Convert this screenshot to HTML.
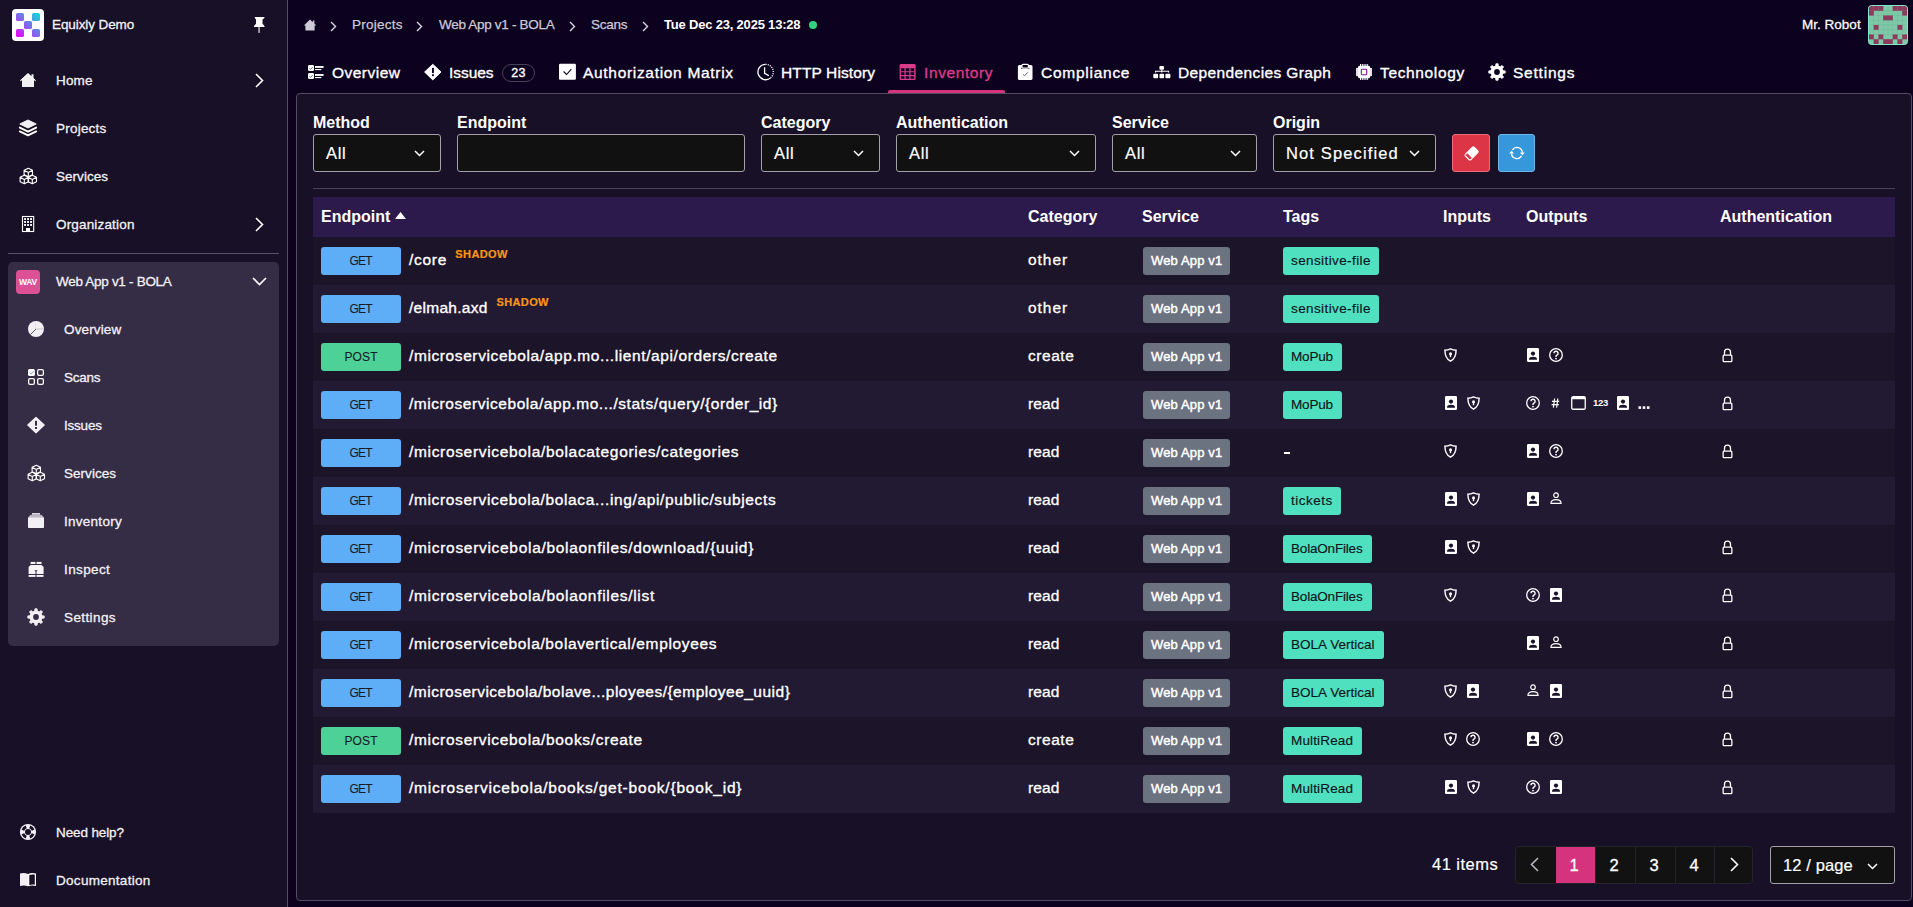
<!DOCTYPE html><html><head><meta charset="utf-8"><style>
*{box-sizing:border-box;margin:0;padding:0}
html,body{width:1913px;height:907px;overflow:hidden;background:#0c0220;font-family:"Liberation Sans",sans-serif;color:#fff}
.ab{position:absolute}
.t{position:absolute;white-space:nowrap;height:20px;line-height:20px}
#sb{position:absolute;left:0;top:0;width:288px;height:907px;background:#171026;border-right:1px solid #544c62}
.nav{-webkit-text-stroke:0.3px #f2f0f5}
.nav2{-webkit-text-stroke:0.25px #cdc9d4}
.ic{position:absolute;overflow:visible}
#panel{position:absolute;left:296px;top:93px;width:1616px;height:808px;background:#171026;border:1px solid #544c62;border-radius:4px}
.lbl{font-size:16px;font-weight:bold;color:#fff}
.sel{position:absolute;top:134px;height:38px;background:#111;border:1px solid #a49fa8;border-radius:3px}
.sel span{position:absolute;left:12px;top:8px;font-size:16.5px;line-height:20px;color:#fff;white-space:nowrap;-webkit-text-stroke:0.2px #fff}
.sel svg{position:absolute;right:15px;top:15px}
.th{font-size:16px;font-weight:bold;color:#fff}
.row{position:absolute;left:313px;width:1582px;height:48px}
.mb{position:absolute;left:8px;top:10px;width:80px;height:28px;border-radius:3px;font-size:12px;color:#1a1a28;text-align:center;line-height:28px;-webkit-text-stroke:0.1px #1a1a28}
.get{background:#5eadf7}
.post{background:#4dd196}
.ep{position:absolute;left:96px;top:13px;font-size:15.5px;line-height:20px;color:#fff;white-space:nowrap;-webkit-text-stroke:0.35px #fff}
.shadow{position:absolute;top:10px;line-height:14px;font-size:11px;font-weight:bold;color:#fd9418;letter-spacing:0.4px;white-space:nowrap;-webkit-text-stroke:0.2px #fd9418}
.cat{position:absolute;left:715px;top:12.5px;font-size:15.5px;line-height:20px;color:#fff;letter-spacing:0.5px;-webkit-text-stroke:0.3px #fff}
.svc{position:absolute;left:830px;top:10px;width:87px;height:28px;background:#6b7280;border-radius:3px;font-size:13px;line-height:28px;padding-left:8px;color:#fff;white-space:nowrap;-webkit-text-stroke:0.45px #fff;letter-spacing:0.15px}
.tag{position:absolute;left:970px;top:10px;height:28px;background:#4fe0bf;border-radius:3px;font-size:13.5px;line-height:28px;padding:0 0 0 8px;color:#10151a;white-space:nowrap;-webkit-text-stroke:0.15px #10151a}
</style></head><body>
<div id="sb">
<svg class="ic" style="left:12px;top:9px" width="32" height="32" viewBox="0 0 32 32"><defs><linearGradient id="lg" gradientUnits="userSpaceOnUse" x1="4" y1="28" x2="28" y2="4"><stop offset="0" stop-color="#f000ff"/><stop offset="0.5" stop-color="#7b6cec"/><stop offset="1" stop-color="#00e4d6"/></linearGradient></defs><rect width="32" height="32" rx="4" fill="#fff"/><g fill="url(#lg)"><rect x="4" y="4" width="8" height="8" rx="1.6"/><rect x="20" y="4" width="8" height="8" rx="1.6"/><rect x="12" y="12" width="8" height="8" rx="1.6"/><rect x="4" y="20" width="8" height="8" rx="1.6"/><rect x="20" y="20" width="8" height="8" rx="1.6"/></g></svg>
<div class="t nav" style="left:52px;top:15px;font-size:13.5px;color:#f2f0f5;letter-spacing:-0.091px;">Equixly Demo</div>
<svg class="ic" style="left:247px;top:12px" width="24" height="24" viewBox="0 0 24 24"><path d="M7.8 4.9h9.6v1.2l-1.9 1.3v4.3l2 2.2v1.1H7v-1.1l2-2.2V7.4L7.8 6.1z" fill="#fff"/><rect x="11.5" y="14.5" width="1.1" height="6.4" fill="#fff"/></svg>
<div class="t nav" style="left:56px;top:71px;font-size:13.5px;color:#f2f0f5;letter-spacing:0.133px;">Home</div>
<svg class="ic" style="left:255px;top:73px" width="9" height="15" viewBox="0 0 9 15"><path d="M1 1l6.5 6.5L1 14" stroke="#fff" stroke-width="1.6" fill="none"/></svg>
<div class="t nav" style="left:56px;top:119px;font-size:13.5px;color:#f2f0f5;letter-spacing:0.221px;">Projects</div>
<div class="t nav" style="left:56px;top:167px;font-size:13.5px;color:#f2f0f5;letter-spacing:0.036px;">Services</div>
<div class="t nav" style="left:56px;top:215px;font-size:13.5px;color:#f2f0f5;letter-spacing:0.168px;">Organization</div>
<svg class="ic" style="left:255px;top:217px" width="9" height="15" viewBox="0 0 9 15"><path d="M1 1l6.5 6.5L1 14" stroke="#fff" stroke-width="1.6" fill="none"/></svg>
<svg class="ic" style="left:16px;top:68px" width="24" height="24" viewBox="0 0 24 24"><path d="M12 5.2L4 12.6h2v6.4h12v-6.4h2l-2.5-2.3V6.2h-2v2.2z" fill="#f0eff2"/><path d="M4.3 12.8L12 5.6l7.7 7.2" fill="none" stroke="#fff" stroke-width="0.9"/></svg>
<svg class="ic" style="left:16px;top:116px" width="24" height="24" viewBox="0 0 24 24"><path d="M12 4L3.8 8 12 12l8.2-4z" fill="#f2f0f5" stroke="#f2f0f5" stroke-width="1" stroke-linejoin="round"/><path d="M3.8 11.6L12 15.6l8.2-4" fill="none" stroke="#fff" stroke-width="1.9" stroke-linejoin="round" stroke-linecap="round"/><path d="M3.8 15.4L12 19.4l8.2-4" fill="none" stroke="#fff" stroke-width="1.9" stroke-linejoin="round" stroke-linecap="round"/></svg>
<svg class="ic" style="left:16px;top:164px" width="24" height="24" viewBox="0 0 24 24" fill="none" stroke="#fff" stroke-width="1.1" stroke-linejoin="round"><path d="M12.3 4.199999999999999l4.2 2.1v4.4L12.3 12.799999999999999l-4.2-2.1V6.299999999999999z M8.100000000000001 6.299999999999999L12.3 8.5l4.2-2.2 M12.3 8.5v4.3"/><path d="M8.3 11.2l4.2 2.1v4.4L8.3 19.799999999999997l-4.2-2.1V13.299999999999999z M4.1000000000000005 13.299999999999999L8.3 15.5l4.2-2.2 M8.3 15.5v4.3"/><path d="M16.3 11.2l4.2 2.1v4.4L16.3 19.799999999999997l-4.2-2.1V13.299999999999999z M12.100000000000001 13.299999999999999L16.3 15.5l4.2-2.2 M16.3 15.5v4.3"/></svg>
<svg class="ic" style="left:16px;top:212px" width="24" height="24" viewBox="0 0 24 24"><rect x="6.5" y="4.5" width="11.2" height="15" fill="none" stroke="#fff" stroke-width="1.1"/><g fill="#fff"><rect x="8.1" y="6.1" width="1.9" height="1.9"/><rect x="11.1" y="6.1" width="1.9" height="1.9"/><rect x="14.1" y="6.1" width="1.9" height="1.9"/><rect x="8.1" y="9" width="1.9" height="1.9"/><rect x="11.1" y="9" width="1.9" height="1.9"/><rect x="14.1" y="9" width="1.9" height="1.9"/><rect x="8.1" y="12" width="1.9" height="1.9"/><rect x="11.1" y="12" width="1.9" height="1.9"/><rect x="14.1" y="12" width="1.9" height="1.9"/><rect x="10" y="16" width="4" height="3.6"/></g></svg>
<div class="ab" style="left:8px;top:253px;width:271px;height:1px;background:#57506a"></div>
<div class="ab" style="left:8px;top:262px;width:271px;height:384px;background:#352d45;border-radius:5px"></div>
<div class="ab" style="left:16px;top:270px;width:24px;height:24px;background:#dc5196;border-radius:4px;font-size:8.5px;font-weight:bold;line-height:24px;text-align:center;color:#fff;letter-spacing:-0.2px">WAV</div>
<div class="t nav" style="left:56px;top:272px;font-size:13.5px;color:#f2f0f5;letter-spacing:-0.297px;">Web App v1 - BOLA</div>
<svg class="ic" style="left:252px;top:277px" width="15" height="9" viewBox="0 0 15 9"><path d="M1 1l6.5 6.5L14 1" stroke="#fff" stroke-width="1.6" fill="none"/></svg>
<div class="t nav" style="left:64px;top:320px;font-size:13.5px;color:#f2f0f5;letter-spacing:0.143px;">Overview</div>
<div class="t nav" style="left:64px;top:368px;font-size:13.5px;color:#f2f0f5;letter-spacing:-0.225px;">Scans</div>
<div class="t nav" style="left:64px;top:416px;font-size:13.5px;color:#f2f0f5;letter-spacing:-0.22px;">Issues</div>
<div class="t nav" style="left:64px;top:464px;font-size:13.5px;color:#f2f0f5;letter-spacing:0.036px;">Services</div>
<div class="t nav" style="left:64px;top:512px;font-size:13.5px;color:#f2f0f5;letter-spacing:0.269px;">Inventory</div>
<div class="t nav" style="left:64px;top:560px;font-size:13.5px;color:#f2f0f5;letter-spacing:0.375px;">Inspect</div>
<div class="t nav" style="left:64px;top:608px;font-size:13.5px;color:#f2f0f5;letter-spacing:0.4px;">Settings</div>
<div class="t nav" style="left:56px;top:823px;font-size:13.5px;color:#f2f0f5;letter-spacing:-0.117px;">Need help?</div>
<div class="t nav" style="left:56px;top:871px;font-size:13.5px;color:#f2f0f5;letter-spacing:0.292px;">Documentation</div>
</div>
<svg class="ic" style="left:24px;top:317px" width="24" height="24" viewBox="0 0 24 24" ><circle cx="12" cy="12" r="8" fill="#f2f0f5"/><path d="M12 12V4" stroke="#f2f0f5" stroke-width="1"/><path d="M12.3 12h7.7" stroke="#c9c4cf" stroke-width="1"/><path d="M12 12L6.3 17.7" stroke="#352d45" stroke-width="0.8"/><path d="M11.5 4.2v7.8" stroke="#e8c9a0" stroke-width="0.5" opacity="0.6"/></svg>
<svg class="ic" style="left:24px;top:365px" width="24" height="24" viewBox="0 0 24 24" ><rect x="4" y="4" width="6.9" height="6.9" rx="1.5" fill="#fff"/><path d="M5.6 7.6l1.5 1.3 2.4-2.7" fill="none" stroke="#6a8fc0" stroke-width="0.9"/><g fill="none" stroke="#fff" stroke-width="1.3"><rect x="13.65" y="4.65" width="5.7" height="5.7" rx="1.3"/><rect x="4.65" y="13.65" width="5.7" height="5.7" rx="1.3"/><rect x="13.65" y="13.65" width="5.7" height="5.7" rx="1.3"/></g></svg>
<svg class="ic" style="left:24px;top:413px" width="24" height="24" viewBox="0 0 24 24" ><path d="M12 4.3L20.2 12 12 19.9 3.8 12z" fill="#f2f0f5" stroke="#f2f0f5" stroke-width="1.1" stroke-linejoin="round"/><rect x="11" y="7.9" width="2" height="4.8" fill="#352d45"/><rect x="11" y="14" width="2" height="2" fill="#352d45"/></svg>
<svg class="ic" style="left:24px;top:461px" width="24" height="24" viewBox="0 0 24 24" ><g fill="none" stroke="#fff" stroke-width="1.1" stroke-linejoin="round"><path d="M12.3 4.199999999999999l4.2 2.1v4.4L12.3 12.799999999999999l-4.2-2.1V6.299999999999999z M8.100000000000001 6.299999999999999L12.3 8.5l4.2-2.2 M12.3 8.5v4.3"/><path d="M8.3 11.2l4.2 2.1v4.4L8.3 19.799999999999997l-4.2-2.1V13.299999999999999z M4.1000000000000005 13.299999999999999L8.3 15.5l4.2-2.2 M8.3 15.5v4.3"/><path d="M16.3 11.2l4.2 2.1v4.4L16.3 19.799999999999997l-4.2-2.1V13.299999999999999z M12.100000000000001 13.299999999999999L16.3 15.5l4.2-2.2 M16.3 15.5v4.3"/></g></svg>
<svg class="ic" style="left:24px;top:509px" width="24" height="24" viewBox="0 0 24 24" ><rect x="8" y="4" width="8" height="1.8" fill="#dcd8e2"/><path d="M6.5 5.8h11l2.5 2.7H4z" fill="#bdb7c6"/><rect x="4" y="8.3" width="16" height="10.7" rx="0.8" fill="#f2f0f5"/></svg>
<svg class="ic" style="left:24px;top:557px" width="24" height="24" viewBox="0 0 24 24" ><g fill="#f6f4f8"><rect x="6.6" y="4.9" width="4.8" height="2.1"/><rect x="12.5" y="4.9" width="5" height="2.1"/><path d="M6.6 7.9h10.9l2.1 2.1v6.9H4.6V9.9z"/><rect x="4.6" y="18" width="6.9" height="1.9"/><rect x="12.5" y="18" width="7" height="1.9"/></g><path d="M10.3 13.2h3.4l-1.2 1.2v2.5h-1v-2.5z" fill="#352d45"/></svg>
<svg class="ic" style="left:24px;top:605px" width="24" height="24" viewBox="0 0 24 24"><path d="M10.60 6.37 L10.90 3.77 L13.10 3.77 L13.40 6.37 L14.99 7.03 L17.04 5.40 L18.60 6.96 L16.97 9.01 L17.63 10.60 L20.23 10.90 L20.23 13.10 L17.63 13.40 L16.97 14.99 L18.60 17.04 L17.04 18.60 L14.99 16.97 L13.40 17.63 L13.10 20.23 L10.90 20.23 L10.60 17.63 L9.01 16.97 L6.96 18.60 L5.40 17.04 L7.03 14.99 L6.37 13.40 L3.77 13.10 L3.77 10.90 L6.37 10.60 L7.03 9.01 L5.40 6.96 L6.96 5.40 L9.01 7.03z" fill="#f2f0f5" stroke="#f2f0f5" stroke-width="0.8" stroke-linejoin="round"/><circle cx="12" cy="12" r="6.3" fill="#f2f0f5"/><circle cx="12" cy="12" r="2.9" fill="#352d45"/></svg>
<svg class="ic" style="left:16px;top:820px" width="24" height="24" viewBox="0 0 24 24"><circle cx="12" cy="12" r="8.1" fill="#f4f2f6"/><path d="M18.43 14.21A6.8 6.8 0 0 1 14.21 18.43L13.30 15.78A4.0 4.0 0 0 0 15.78 13.30zM9.79 18.43A6.8 6.8 0 0 1 5.57 14.21L8.22 13.30A4.0 4.0 0 0 0 10.70 15.78zM5.57 9.79A6.8 6.8 0 0 1 9.79 5.57L10.70 8.22A4.0 4.0 0 0 0 8.22 10.70zM14.21 5.57A6.8 6.8 0 0 1 18.43 9.79L15.78 10.70A4.0 4.0 0 0 0 13.30 8.22z" fill="#171026"/><circle cx="12" cy="12" r="3" fill="#171026"/></svg>
<svg class="ic" style="left:16px;top:868px" width="24" height="24" viewBox="0 0 24 24" ><path d="M4 5.6c2.6-.8 5.3-.8 8 .3v12.3c-2.7-1-5.4-1-8-.3z" fill="#f2f0f5"/><path d="M12 5.9c2.7-1.1 5.4-1.1 8-.3v12.3c-2.6-.7-5.3-.7-8 .3z" fill="#fff"/><path d="M13.3 7c2-.6 3.9-.7 5.5-.3v10c-1.7-.4-3.6-.3-5.5.3z" fill="#171026"/></svg>
<svg class="ic" style="left:303px;top:19px" width="14" height="13" viewBox="0 0 14 13"><path d="M7 0.6L0.8 6.4h1.6v5.2h9.2V6.4h1.6L11.4 4.6V1.4H9.8v1.8z" fill="#cfcbd6"/></svg>
<svg class="ic" style="left:330px;top:20.5px" width="7" height="11" viewBox="0 0 7 11"><path d="M1 1l4.5 4.5L1 10" stroke="#dcd8e2" stroke-width="1.4" fill="none"/></svg>
<svg class="ic" style="left:416px;top:20.5px" width="7" height="11" viewBox="0 0 7 11"><path d="M1 1l4.5 4.5L1 10" stroke="#dcd8e2" stroke-width="1.4" fill="none"/></svg>
<svg class="ic" style="left:569px;top:20.5px" width="7" height="11" viewBox="0 0 7 11"><path d="M1 1l4.5 4.5L1 10" stroke="#dcd8e2" stroke-width="1.4" fill="none"/></svg>
<svg class="ic" style="left:642px;top:20.5px" width="7" height="11" viewBox="0 0 7 11"><path d="M1 1l4.5 4.5L1 10" stroke="#dcd8e2" stroke-width="1.4" fill="none"/></svg>
<div class="t nav2" style="left:352px;top:15px;font-size:13.5px;color:#cdc9d4;letter-spacing:0.236px;">Projects</div>
<div class="t nav2" style="left:439px;top:15px;font-size:13.5px;color:#cdc9d4;letter-spacing:-0.303px;">Web App v1 - BOLA</div>
<div class="t nav2" style="left:591px;top:15px;font-size:13.5px;color:#cdc9d4;letter-spacing:-0.225px;">Scans</div>
<div class="t" style="left:664px;top:15px;font-size:13px;font-weight:bold;color:#fff;letter-spacing:-0.195px;">Tue Dec 23, 2025 13:28</div>
<div class="ab" style="left:809px;top:21px;width:8px;height:8px;border-radius:50%;background:#2fd47c"></div>
<div class="t nav" style="left:1802px;top:15px;font-size:13.5px;color:#fff;letter-spacing:0.013px;">Mr. Robot</div>
<svg class="ic" style="left:1868px;top:5px" width="40" height="40" viewBox="0 0 40 40"><defs><clipPath id="avc"><rect x="0.5" y="0.5" width="39" height="39" rx="3"/></clipPath></defs><g clip-path="url(#avc)"><rect width="40" height="40" fill="#7ecaa8"/><rect x="5.45" y="1" width="0.6" height="38" fill="#6fae92" opacity="0.6"/><rect y="5.45" x="1" height="0.6" width="38" fill="#6fae92" opacity="0.6"/><rect x="10.20" y="1" width="0.6" height="38" fill="#6fae92" opacity="0.6"/><rect y="10.20" x="1" height="0.6" width="38" fill="#6fae92" opacity="0.6"/><rect x="14.95" y="1" width="0.6" height="38" fill="#6fae92" opacity="0.6"/><rect y="14.95" x="1" height="0.6" width="38" fill="#6fae92" opacity="0.6"/><rect x="19.70" y="1" width="0.6" height="38" fill="#6fae92" opacity="0.6"/><rect y="19.70" x="1" height="0.6" width="38" fill="#6fae92" opacity="0.6"/><rect x="24.45" y="1" width="0.6" height="38" fill="#6fae92" opacity="0.6"/><rect y="24.45" x="1" height="0.6" width="38" fill="#6fae92" opacity="0.6"/><rect x="29.20" y="1" width="0.6" height="38" fill="#6fae92" opacity="0.6"/><rect y="29.20" x="1" height="0.6" width="38" fill="#6fae92" opacity="0.6"/><rect x="33.95" y="1" width="0.6" height="38" fill="#6fae92" opacity="0.6"/><rect y="33.95" x="1" height="0.6" width="38" fill="#6fae92" opacity="0.6"/><rect x="0.95" y="0.95" width="4.85" height="4.85" fill="#8d3b5d"/><rect x="5.70" y="0.95" width="4.85" height="4.85" fill="#8d3b5d"/><rect x="10.45" y="0.95" width="4.85" height="4.85" fill="#8d3b5d"/><rect x="24.70" y="0.95" width="4.85" height="4.85" fill="#8d3b5d"/><rect x="29.45" y="0.95" width="4.85" height="4.85" fill="#8d3b5d"/><rect x="34.20" y="0.95" width="4.85" height="4.85" fill="#8d3b5d"/><rect x="0.95" y="5.70" width="4.85" height="4.85" fill="#8d3b5d"/><rect x="34.20" y="5.70" width="4.85" height="4.85" fill="#8d3b5d"/><rect x="15.20" y="10.45" width="4.85" height="4.85" fill="#8d3b5d"/><rect x="19.95" y="10.45" width="4.85" height="4.85" fill="#8d3b5d"/><rect x="5.70" y="19.95" width="4.85" height="4.85" fill="#8d3b5d"/><rect x="29.45" y="19.95" width="4.85" height="4.85" fill="#8d3b5d"/><rect x="0.95" y="29.45" width="4.85" height="4.85" fill="#8d3b5d"/><rect x="10.45" y="29.45" width="4.85" height="4.85" fill="#8d3b5d"/><rect x="24.70" y="29.45" width="4.85" height="4.85" fill="#8d3b5d"/><rect x="34.20" y="29.45" width="4.85" height="4.85" fill="#8d3b5d"/><rect x="5.70" y="34.20" width="4.85" height="4.85" fill="#8d3b5d"/><rect x="15.20" y="34.20" width="4.85" height="4.85" fill="#8d3b5d"/><rect x="19.95" y="34.20" width="4.85" height="4.85" fill="#8d3b5d"/><rect x="29.45" y="34.20" width="4.85" height="4.85" fill="#8d3b5d"/></g><rect x="0.5" y="0.5" width="39" height="39" rx="3" fill="none" stroke="#7fe8c8" stroke-width="1"/></svg>
<div class="t tb" style="left:332px;top:62.5px;font-size:15.5px;color:#fff;letter-spacing:0.479px;-webkit-text-stroke:0.35px #fff">Overview</div>
<div class="t tb" style="left:449px;top:62.5px;font-size:15.5px;color:#fff;letter-spacing:-0.06px;-webkit-text-stroke:0.35px #fff">Issues</div>
<div class="t tb" style="left:583px;top:62.5px;font-size:15.5px;color:#fff;letter-spacing:0.687px;-webkit-text-stroke:0.35px #fff">Authorization Matrix</div>
<div class="t tb" style="left:781px;top:62.5px;font-size:15.5px;color:#fff;letter-spacing:0.118px;-webkit-text-stroke:0.35px #fff">HTTP History</div>
<div class="t tb" style="left:924px;top:62.5px;font-size:15.5px;color:#dc3a86;letter-spacing:0.606px;-webkit-text-stroke:0.35px #dc3a86">Inventory</div>
<div class="t tb" style="left:1041px;top:62.5px;font-size:15.5px;color:#fff;letter-spacing:0.739px;-webkit-text-stroke:0.35px #fff">Compliance</div>
<div class="t tb" style="left:1178px;top:62.5px;font-size:15.5px;color:#fff;letter-spacing:0.382px;-webkit-text-stroke:0.35px #fff">Dependencies Graph</div>
<div class="t tb" style="left:1380px;top:62.5px;font-size:15.5px;color:#fff;letter-spacing:0.644px;-webkit-text-stroke:0.35px #fff">Technology</div>
<div class="t tb" style="left:1513px;top:62.5px;font-size:15.5px;color:#fff;letter-spacing:0.786px;-webkit-text-stroke:0.35px #fff">Settings</div>
<div class="ab" style="left:502px;top:64px;width:33px;height:18px;border:1px solid #4a4058;border-radius:9px;font-size:12.5px;line-height:16px;text-align:center;color:#fff;-webkit-text-stroke:0.35px #fff;letter-spacing:0.3px">23</div>
<div class="ab" style="left:888px;top:90px;width:117px;height:3px;background:#d6337e;border-radius:2px 2px 0 0"></div>
<svg class="ic" style="left:304px;top:60px" width="24" height="24" viewBox="0 0 24 24" ><rect x="4" y="5" width="6" height="6" rx="1.3" fill="#fff"/><path d="M5.4 8.2l1.3 1.2 2.1-2.4" fill="none" stroke="#5a6a9a" stroke-width="0.9"/><rect x="4" y="13" width="6" height="6" rx="1.3" fill="#fff"/><path d="M5.4 16.2l1.3 1.2 2.1-2.4" fill="none" stroke="#5a6a9a" stroke-width="0.9"/><g fill="#fff"><rect x="11" y="6" width="8.6" height="1.9"/><rect x="11" y="9" width="6.4" height="1.1"/><rect x="11" y="14" width="8.6" height="1.9"/><rect x="11" y="17" width="6.4" height="1.1"/></g></svg>
<svg class="ic" style="left:420px;top:60px" width="24" height="24" viewBox="0 0 24 24" ><path d="M12.8 4.3L21 12l-8.2 7.9L4.6 12z" fill="#fff" stroke="#fff" stroke-width="1" stroke-linejoin="round"/><rect x="12" y="7.9" width="1.9" height="5.2" fill="#0c0220"/><rect x="12" y="14.3" width="1.9" height="1.8" fill="#0c0220"/></svg>
<svg class="ic" style="left:555px;top:60px" width="24" height="24" viewBox="0 0 24 24" ><rect x="4" y="3.8" width="16.9" height="16" rx="1.2" fill="#fff"/><path d="M8.6 11.5l3 3 4.7-5.3" fill="none" stroke="#0c0220" stroke-width="1.1"/></svg>
<svg class="ic" style="left:753px;top:60px" width="24" height="24" viewBox="0 0 24 24" ><g fill="none" stroke="#fff" stroke-width="1.3"><path d="M12.6 4.3A7.7 7.7 0 1 0 17.9 17.6"/><path d="M12.6 4.3A7.7 7.7 0 0 1 20.3 12a7.7 7.7 0 0 1-2.4 5.6" stroke-dasharray="1.1 1.1"/><path d="M11.6 7.2v6.1l4.2 2.3"/></g></svg>
<svg class="ic" style="left:895px;top:60px" width="24" height="24" viewBox="0 0 24 24" ><g fill="#dc3a8a"><path d="M4.6 5.2a1.2 1.2 0 0 1 1.2-1.2h13.6a1.2 1.2 0 0 1 1.2 1.2v13.6a1.2 1.2 0 0 1-1.2 1.2H5.8a1.2 1.2 0 0 1-1.2-1.2z M5.9 8.3v2.9h3.6V8.3z M10.7 8.3v2.9h3.6V8.3z M15.5 8.3v2.9h3.7V8.3z M5.9 12.3v2.8h3.6v-2.8z M10.7 12.3v2.8h3.6v-2.8z M15.5 12.3v2.8h3.7v-2.8z M5.9 16.2v2.6h3.6v-2.6z M10.7 16.2v2.6h3.6v-2.6z M15.5 16.2v2.6h3.7v-2.6z" fill-rule="evenodd"/></g></svg>
<svg class="ic" style="left:1013px;top:60px" width="24" height="24" viewBox="0 0 24 24" ><rect x="4.9" y="5" width="14.6" height="15.1" rx="1.6" fill="#fff"/><rect x="8.1" y="7.6" width="8.2" height="1.4" fill="#0c0220"/><rect x="8.9" y="4.3" width="6.6" height="3.9" rx="1.2" fill="#0c0220" stroke="#fff" stroke-width="1.3"/><path d="M10.1 14.4l1.5 1.4 3.2-3.4" fill="none" stroke="#5a4a80" stroke-width="0.9"/></svg>
<svg class="ic" style="left:1150px;top:60px" width="24" height="24" viewBox="0 0 24 24" ><g fill="#fff"><rect x="9.4" y="6" width="4.6" height="3.8" rx="1"/><rect x="3.3" y="13.8" width="4.8" height="4.5" rx="1"/><rect x="9.5" y="13.8" width="4.6" height="4.5" rx="1"/><rect x="15.4" y="13.8" width="5" height="4.5" rx="1"/></g><path d="M5.6 12.5v-1.2h13v1.2M11.8 9.8v2.7" fill="none" stroke="#fff" stroke-width="1.1"/></svg>
<svg class="ic" style="left:1352px;top:60px" width="24" height="24" viewBox="0 0 24 24" ><g fill="#fff"><rect x="5.8" y="5.8" width="12.5" height="12.5" rx="2"/><path d="M8 4h1v2H8zM9.8 4h1v2h-1zM11.6 4h1v2h-1zM13.4 4h1v2h-1zM15.2 4h.9v2h-.9z"/><path d="M8 18h1v2H8zM9.8 18h1v2h-1zM11.6 18h1v2h-1zM13.4 18h1v2h-1zM15.2 18h.9v2h-.9z"/><rect x="4" y="8" width="2" height="8" fill="#e6dfe8"/><rect x="18" y="8" width="2" height="8" fill="#e6dfe8"/></g><rect x="9.3" y="9.3" width="5.4" height="5.4" rx="0.6" fill="none" stroke="#7a1a8a" stroke-width="1.1"/></svg>
<svg class="ic" style="left:1485px;top:60px" width="24" height="24" viewBox="0 0 24 24"><path d="M10.60 6.37 L10.90 3.77 L13.10 3.77 L13.40 6.37 L14.99 7.03 L17.04 5.40 L18.60 6.96 L16.97 9.01 L17.63 10.60 L20.23 10.90 L20.23 13.10 L17.63 13.40 L16.97 14.99 L18.60 17.04 L17.04 18.60 L14.99 16.97 L13.40 17.63 L13.10 20.23 L10.90 20.23 L10.60 17.63 L9.01 16.97 L6.96 18.60 L5.40 17.04 L7.03 14.99 L6.37 13.40 L3.77 13.10 L3.77 10.90 L6.37 10.60 L7.03 9.01 L5.40 6.96 L6.96 5.40 L9.01 7.03z" fill="#fff" stroke="#fff" stroke-width="0.8" stroke-linejoin="round"/><circle cx="12" cy="12" r="6.3" fill="#fff"/><circle cx="12" cy="12" r="2.9" fill="#0c0220"/></svg>
<div id="panel"></div>
<div class="t lbl" style="left:313px;top:113px">Method</div>
<div class="t lbl" style="left:457px;top:113px">Endpoint</div>
<div class="t lbl" style="left:761px;top:113px">Category</div>
<div class="t lbl" style="left:896px;top:113px">Authentication</div>
<div class="t lbl" style="left:1112px;top:113px">Service</div>
<div class="t lbl" style="left:1273px;top:113px">Origin</div>
<div class="sel" style="left:313px;width:128px"><span style="letter-spacing:0.725px">All</span><svg width="11" height="7" viewBox="0 0 11 7" ><path d="M1 1l4.5 4.5L10 1" stroke="#fff" stroke-width="1.5" fill="none"/></svg></div>
<div class="sel" style="left:761px;width:119px"><span style="letter-spacing:0.725px">All</span><svg width="11" height="7" viewBox="0 0 11 7" ><path d="M1 1l4.5 4.5L10 1" stroke="#fff" stroke-width="1.5" fill="none"/></svg></div>
<div class="sel" style="left:896px;width:200px"><span style="letter-spacing:0.725px">All</span><svg width="11" height="7" viewBox="0 0 11 7" ><path d="M1 1l4.5 4.5L10 1" stroke="#fff" stroke-width="1.5" fill="none"/></svg></div>
<div class="sel" style="left:1112px;width:145px"><span style="letter-spacing:0.725px">All</span><svg width="11" height="7" viewBox="0 0 11 7" ><path d="M1 1l4.5 4.5L10 1" stroke="#fff" stroke-width="1.5" fill="none"/></svg></div>
<div class="sel" style="left:1273px;width:163px"><span style="letter-spacing:1.137px">Not Specified</span><svg width="11" height="7" viewBox="0 0 11 7" ><path d="M1 1l4.5 4.5L10 1" stroke="#fff" stroke-width="1.5" fill="none"/></svg></div>
<div class="sel" style="left:457px;width:288px"></div>
<div class="ab" style="left:1452px;top:134px;width:38px;height:38px;background:#dc3545;border:1px solid #ea6f7a;border-radius:3px"><svg class="ic" style="left:9px;top:9px" width="20" height="20" viewBox="0 0 20 20"><g transform="rotate(45 9.6 9.4)"><rect x="5.2" y="2.6" width="8.8" height="13.6" rx="2" fill="#fff"/><rect x="6.4" y="12.4" width="6.4" height="2.6" fill="#dc3545"/></g></svg></div>
<div class="ab" style="left:1498px;top:134px;width:37px;height:38px;background:#3697db;border:1px solid #6cb6ea;border-radius:3px"><svg class="ic" style="left:9px;top:9px" width="20" height="20" viewBox="0 0 20 20" fill="none" stroke="#fff" stroke-width="1.3"><path d="M4.4 6.1A5.3 5.3 0 0 1 14.3 8.6"/><path d="M13.5 11.9A5.3 5.3 0 0 1 3.6 9.4"/><path d="M11.9 8.4h4.9l-2.45 2.8z" fill="#fff" stroke="none"/><path d="M1.15 9.6h4.9L3.6 6.8z" fill="#fff" stroke="none"/></svg></div>
<div class="ab" style="left:313px;top:188px;width:1582px;height:1px;background:#4a4258"></div>
<div class="ab" style="left:313px;top:197px;width:1582px;height:40px;background:#2d1a4d"></div>
<div class="t th" style="left:321px;top:207px">Endpoint</div>
<svg class="ic" style="left:395px;top:212px" width="11" height="7" viewBox="0 0 11 7"><path d="M5.5 0L11 7H0z" fill="#fff"/></svg>
<div class="t th" style="left:1028px;top:207px">Category</div>
<div class="t th" style="left:1142px;top:207px">Service</div>
<div class="t th" style="left:1283px;top:207px">Tags</div>
<div class="t th" style="left:1443px;top:207px">Inputs</div>
<div class="t th" style="left:1526px;top:207px">Outputs</div>
<div class="t th" style="left:1720px;top:207px">Authentication</div>
<div class="row" style="top:237px;background:#1c1429">
<div class="mb get" style="letter-spacing:-0.725px;text-indent:-0.725px">GET</div>
<div class="ep" style="letter-spacing:0.712px">/core</div>
<div class="shadow" style="left:142.3px">SHADOW</div>
<div class="cat" style="letter-spacing:0.963px">other</div>
<div class="svc">Web App v1</div>
<div class="tag" style="width:96px;letter-spacing:0.4px">sensitive-file</div>
</div>
<div class="row" style="top:285px;background:#221a33">
<div class="mb get" style="letter-spacing:-0.725px;text-indent:-0.725px">GET</div>
<div class="ep" style="letter-spacing:0.289px">/elmah.axd</div>
<div class="shadow" style="left:183.4px">SHADOW</div>
<div class="cat" style="letter-spacing:0.963px">other</div>
<div class="svc">Web App v1</div>
<div class="tag" style="width:96px;letter-spacing:0.4px">sensitive-file</div>
</div>
<div class="row" style="top:333px;background:#1c1429">
<div class="mb post" style="letter-spacing:0.117px;text-indent:0.117px">POST</div>
<div class="ep" style="letter-spacing:0.601px">/microservicebola/app.mo...lient/api/orders/create</div>
<div class="cat" style="letter-spacing:0.54px">create</div>
<div class="svc">Web App v1</div>
<div class="tag" style="width:59px;letter-spacing:-0.188px">MoPub</div>
</div>
<svg class="ic" style="left:1444.0px;top:348px" width="13" height="14" viewBox="0 0 13 14"><path d="M6.5 0.8c2 .9 3.8 1.3 5.6 1.4 0 5.2-1.9 9-5.6 11-3.7-2-5.6-5.8-5.6-11 1.8-.1 3.6-.5 5.6-1.4z" fill="none" stroke="#fff" stroke-width="1.4"/><circle cx="6.5" cy="5.8" r="1.5" fill="#fff"/><rect x="5.8" y="6" width="1.4" height="3.2" fill="#fff"/></svg>
<svg class="ic" style="left:1527.0px;top:348px" width="12" height="14" viewBox="0 0 12 14"><rect x="0" y="0" width="12" height="14" rx="1.2" fill="#fff"/><circle cx="6" cy="5.6" r="2.1" fill="#1c1429"/><path d="M2 11.2c0-1.6 1.6-2.4 4-2.4s4 .8 4 2.4v.6H2z" fill="#1c1429"/></svg>
<svg class="ic" style="left:1548.5px;top:348px" width="14" height="14" viewBox="0 0 14 14"><circle cx="7" cy="7" r="6.3" fill="none" stroke="#fff" stroke-width="1.3"/><path d="M4.9 5.3a2.1 2.1 0 1 1 3 1.9c-.6.3-.9.7-.9 1.3v.6" fill="none" stroke="#fff" stroke-width="1.4"/><circle cx="7" cy="10.6" r=".9" fill="#fff"/></svg>
<svg class="ic" style="left:1721.5px;top:348px" width="11" height="16" viewBox="0 0 11 16" fill="none" stroke="#fff" stroke-width="1.3"><rect x="1.15" y="7.2" width="8.7" height="6.5" rx="0.9"/><path d="M2.5 7.2V4.1a3 3 0 0 1 6 0v3.1"/></svg>
<div class="row" style="top:381px;background:#221a33">
<div class="mb get" style="letter-spacing:-0.725px;text-indent:-0.725px">GET</div>
<div class="ep" style="letter-spacing:0.552px">/microservicebola/app.mo.../stats/query/{order_id}</div>
<div class="cat" style="letter-spacing:0.1px">read</div>
<div class="svc">Web App v1</div>
<div class="tag" style="width:59px;letter-spacing:-0.188px">MoPub</div>
</div>
<svg class="ic" style="left:1444.5px;top:396px" width="12" height="14" viewBox="0 0 12 14"><rect x="0" y="0" width="12" height="14" rx="1.2" fill="#fff"/><circle cx="6" cy="5.6" r="2.1" fill="#1c1429"/><path d="M2 11.2c0-1.6 1.6-2.4 4-2.4s4 .8 4 2.4v.6H2z" fill="#1c1429"/></svg>
<svg class="ic" style="left:1466.5px;top:396px" width="13" height="14" viewBox="0 0 13 14"><path d="M6.5 0.8c2 .9 3.8 1.3 5.6 1.4 0 5.2-1.9 9-5.6 11-3.7-2-5.6-5.8-5.6-11 1.8-.1 3.6-.5 5.6-1.4z" fill="none" stroke="#fff" stroke-width="1.4"/><circle cx="6.5" cy="5.8" r="1.5" fill="#fff"/><rect x="5.8" y="6" width="1.4" height="3.2" fill="#fff"/></svg>
<svg class="ic" style="left:1526px;top:396px" width="14" height="14" viewBox="0 0 14 14"><circle cx="7" cy="7" r="6.3" fill="none" stroke="#fff" stroke-width="1.3"/><path d="M4.9 5.3a2.1 2.1 0 1 1 3 1.9c-.6.3-.9.7-.9 1.3v.6" fill="none" stroke="#fff" stroke-width="1.4"/><circle cx="7" cy="10.6" r=".9" fill="#fff"/></svg>
<svg class="ic" style="left:1551.0px;top:396px" width="9" height="14" viewBox="0 0 9 14" fill="none" stroke="#fff" stroke-width="1.2"><path d="M3.6 2.5L2.4 11.6M6.8 2.5L5.6 11.6M1 5.4h7.2M0.6 8.6h7.2"/></svg>
<svg class="ic" style="left:1570.5px;top:396px" width="15" height="14" viewBox="0 0 15 14"><rect x="0.75" y="0.75" width="13.5" height="12.5" rx="1.3" fill="none" stroke="#fff" stroke-width="1.3"/><rect x="0.75" y="0.75" width="13.5" height="2.6" rx="1" fill="#fff"/></svg>
<div class="ab" style="left:1593px;top:396px;font-size:9.5px;font-weight:bold;line-height:14px;color:#fff;letter-spacing:-0.3px">123</div>
<svg class="ic" style="left:1616.5px;top:396px" width="12" height="14" viewBox="0 0 12 14"><rect x="0" y="0" width="12" height="14" rx="1.2" fill="#fff"/><circle cx="6" cy="5.6" r="2.1" fill="#1c1429"/><path d="M2 11.2c0-1.6 1.6-2.4 4-2.4s4 .8 4 2.4v.6H2z" fill="#1c1429"/></svg>
<svg class="ic" style="left:1638.0px;top:396px" width="12" height="14" viewBox="0 0 12 14" fill="#fff"><rect x="0.5" y="10.3" width="2.6" height="2.6"/><rect x="4.7" y="10.3" width="2.6" height="2.6"/><rect x="8.9" y="10.3" width="2.6" height="2.6"/></svg>
<svg class="ic" style="left:1721.5px;top:396px" width="11" height="16" viewBox="0 0 11 16" fill="none" stroke="#fff" stroke-width="1.3"><rect x="1.15" y="7.2" width="8.7" height="6.5" rx="0.9"/><path d="M2.5 7.2V4.1a3 3 0 0 1 6 0v3.1"/></svg>
<div class="row" style="top:429px;background:#1c1429">
<div class="mb get" style="letter-spacing:-0.725px;text-indent:-0.725px">GET</div>
<div class="ep" style="letter-spacing:0.668px">/microservicebola/bolacategories/categories</div>
<div class="cat" style="letter-spacing:0.1px">read</div>
<div class="svc">Web App v1</div>
<div class="ab" style="left:971px;top:23px;width:6px;height:2px;background:#fff"></div>
</div>
<svg class="ic" style="left:1444.0px;top:444px" width="13" height="14" viewBox="0 0 13 14"><path d="M6.5 0.8c2 .9 3.8 1.3 5.6 1.4 0 5.2-1.9 9-5.6 11-3.7-2-5.6-5.8-5.6-11 1.8-.1 3.6-.5 5.6-1.4z" fill="none" stroke="#fff" stroke-width="1.4"/><circle cx="6.5" cy="5.8" r="1.5" fill="#fff"/><rect x="5.8" y="6" width="1.4" height="3.2" fill="#fff"/></svg>
<svg class="ic" style="left:1527.0px;top:444px" width="12" height="14" viewBox="0 0 12 14"><rect x="0" y="0" width="12" height="14" rx="1.2" fill="#fff"/><circle cx="6" cy="5.6" r="2.1" fill="#1c1429"/><path d="M2 11.2c0-1.6 1.6-2.4 4-2.4s4 .8 4 2.4v.6H2z" fill="#1c1429"/></svg>
<svg class="ic" style="left:1548.5px;top:444px" width="14" height="14" viewBox="0 0 14 14"><circle cx="7" cy="7" r="6.3" fill="none" stroke="#fff" stroke-width="1.3"/><path d="M4.9 5.3a2.1 2.1 0 1 1 3 1.9c-.6.3-.9.7-.9 1.3v.6" fill="none" stroke="#fff" stroke-width="1.4"/><circle cx="7" cy="10.6" r=".9" fill="#fff"/></svg>
<svg class="ic" style="left:1721.5px;top:444px" width="11" height="16" viewBox="0 0 11 16" fill="none" stroke="#fff" stroke-width="1.3"><rect x="1.15" y="7.2" width="8.7" height="6.5" rx="0.9"/><path d="M2.5 7.2V4.1a3 3 0 0 1 6 0v3.1"/></svg>
<div class="row" style="top:477px;background:#221a33">
<div class="mb get" style="letter-spacing:-0.725px;text-indent:-0.725px">GET</div>
<div class="ep" style="letter-spacing:0.644px">/microservicebola/bolaca...ing/api/public/subjects</div>
<div class="cat" style="letter-spacing:0.1px">read</div>
<div class="svc">Web App v1</div>
<div class="tag" style="width:58px;letter-spacing:0.508px">tickets</div>
</div>
<svg class="ic" style="left:1444.5px;top:492px" width="12" height="14" viewBox="0 0 12 14"><rect x="0" y="0" width="12" height="14" rx="1.2" fill="#fff"/><circle cx="6" cy="5.6" r="2.1" fill="#1c1429"/><path d="M2 11.2c0-1.6 1.6-2.4 4-2.4s4 .8 4 2.4v.6H2z" fill="#1c1429"/></svg>
<svg class="ic" style="left:1466.5px;top:492px" width="13" height="14" viewBox="0 0 13 14"><path d="M6.5 0.8c2 .9 3.8 1.3 5.6 1.4 0 5.2-1.9 9-5.6 11-3.7-2-5.6-5.8-5.6-11 1.8-.1 3.6-.5 5.6-1.4z" fill="none" stroke="#fff" stroke-width="1.4"/><circle cx="6.5" cy="5.8" r="1.5" fill="#fff"/><rect x="5.8" y="6" width="1.4" height="3.2" fill="#fff"/></svg>
<svg class="ic" style="left:1527.0px;top:492px" width="12" height="14" viewBox="0 0 12 14"><rect x="0" y="0" width="12" height="14" rx="1.2" fill="#fff"/><circle cx="6" cy="5.6" r="2.1" fill="#1c1429"/><path d="M2 11.2c0-1.6 1.6-2.4 4-2.4s4 .8 4 2.4v.6H2z" fill="#1c1429"/></svg>
<svg class="ic" style="left:1549.5px;top:492px" width="12" height="12" viewBox="0 0 12 12" fill="none" stroke="#fff" stroke-width="1.2"><circle cx="6" cy="3.2" r="2.3"/><path d="M1 10.8c0-2 2-3.2 5-3.2s5 1.2 5 3.2v.6H1z"/></svg>
<div class="row" style="top:525px;background:#1c1429">
<div class="mb get" style="letter-spacing:-0.725px;text-indent:-0.725px">GET</div>
<div class="ep" style="letter-spacing:0.697px">/microservicebola/bolaonfiles/download/{uuid}</div>
<div class="cat" style="letter-spacing:0.1px">read</div>
<div class="svc">Web App v1</div>
<div class="tag" style="width:88.7px;letter-spacing:-0.185px">BolaOnFiles</div>
</div>
<svg class="ic" style="left:1444.5px;top:540px" width="12" height="14" viewBox="0 0 12 14"><rect x="0" y="0" width="12" height="14" rx="1.2" fill="#fff"/><circle cx="6" cy="5.6" r="2.1" fill="#1c1429"/><path d="M2 11.2c0-1.6 1.6-2.4 4-2.4s4 .8 4 2.4v.6H2z" fill="#1c1429"/></svg>
<svg class="ic" style="left:1466.5px;top:540px" width="13" height="14" viewBox="0 0 13 14"><path d="M6.5 0.8c2 .9 3.8 1.3 5.6 1.4 0 5.2-1.9 9-5.6 11-3.7-2-5.6-5.8-5.6-11 1.8-.1 3.6-.5 5.6-1.4z" fill="none" stroke="#fff" stroke-width="1.4"/><circle cx="6.5" cy="5.8" r="1.5" fill="#fff"/><rect x="5.8" y="6" width="1.4" height="3.2" fill="#fff"/></svg>
<svg class="ic" style="left:1721.5px;top:540px" width="11" height="16" viewBox="0 0 11 16" fill="none" stroke="#fff" stroke-width="1.3"><rect x="1.15" y="7.2" width="8.7" height="6.5" rx="0.9"/><path d="M2.5 7.2V4.1a3 3 0 0 1 6 0v3.1"/></svg>
<div class="row" style="top:573px;background:#221a33">
<div class="mb get" style="letter-spacing:-0.725px;text-indent:-0.725px">GET</div>
<div class="ep" style="letter-spacing:0.695px">/microservicebola/bolaonfiles/list</div>
<div class="cat" style="letter-spacing:0.1px">read</div>
<div class="svc">Web App v1</div>
<div class="tag" style="width:88.7px;letter-spacing:-0.185px">BolaOnFiles</div>
</div>
<svg class="ic" style="left:1444.0px;top:588px" width="13" height="14" viewBox="0 0 13 14"><path d="M6.5 0.8c2 .9 3.8 1.3 5.6 1.4 0 5.2-1.9 9-5.6 11-3.7-2-5.6-5.8-5.6-11 1.8-.1 3.6-.5 5.6-1.4z" fill="none" stroke="#fff" stroke-width="1.4"/><circle cx="6.5" cy="5.8" r="1.5" fill="#fff"/><rect x="5.8" y="6" width="1.4" height="3.2" fill="#fff"/></svg>
<svg class="ic" style="left:1526.0px;top:588px" width="14" height="14" viewBox="0 0 14 14"><circle cx="7" cy="7" r="6.3" fill="none" stroke="#fff" stroke-width="1.3"/><path d="M4.9 5.3a2.1 2.1 0 1 1 3 1.9c-.6.3-.9.7-.9 1.3v.6" fill="none" stroke="#fff" stroke-width="1.4"/><circle cx="7" cy="10.6" r=".9" fill="#fff"/></svg>
<svg class="ic" style="left:1549.5px;top:588px" width="12" height="14" viewBox="0 0 12 14"><rect x="0" y="0" width="12" height="14" rx="1.2" fill="#fff"/><circle cx="6" cy="5.6" r="2.1" fill="#1c1429"/><path d="M2 11.2c0-1.6 1.6-2.4 4-2.4s4 .8 4 2.4v.6H2z" fill="#1c1429"/></svg>
<svg class="ic" style="left:1721.5px;top:588px" width="11" height="16" viewBox="0 0 11 16" fill="none" stroke="#fff" stroke-width="1.3"><rect x="1.15" y="7.2" width="8.7" height="6.5" rx="0.9"/><path d="M2.5 7.2V4.1a3 3 0 0 1 6 0v3.1"/></svg>
<div class="row" style="top:621px;background:#1c1429">
<div class="mb get" style="letter-spacing:-0.725px;text-indent:-0.725px">GET</div>
<div class="ep" style="letter-spacing:0.637px">/microservicebola/bolavertical/employees</div>
<div class="cat" style="letter-spacing:0.1px">read</div>
<div class="svc">Web App v1</div>
<div class="tag" style="width:100.6px;letter-spacing:0.025px">BOLA Vertical</div>
</div>
<svg class="ic" style="left:1527.0px;top:636px" width="12" height="14" viewBox="0 0 12 14"><rect x="0" y="0" width="12" height="14" rx="1.2" fill="#fff"/><circle cx="6" cy="5.6" r="2.1" fill="#1c1429"/><path d="M2 11.2c0-1.6 1.6-2.4 4-2.4s4 .8 4 2.4v.6H2z" fill="#1c1429"/></svg>
<svg class="ic" style="left:1549.5px;top:636px" width="12" height="12" viewBox="0 0 12 12" fill="none" stroke="#fff" stroke-width="1.2"><circle cx="6" cy="3.2" r="2.3"/><path d="M1 10.8c0-2 2-3.2 5-3.2s5 1.2 5 3.2v.6H1z"/></svg>
<svg class="ic" style="left:1721.5px;top:636px" width="11" height="16" viewBox="0 0 11 16" fill="none" stroke="#fff" stroke-width="1.3"><rect x="1.15" y="7.2" width="8.7" height="6.5" rx="0.9"/><path d="M2.5 7.2V4.1a3 3 0 0 1 6 0v3.1"/></svg>
<div class="row" style="top:669px;background:#221a33">
<div class="mb get" style="letter-spacing:-0.725px;text-indent:-0.725px">GET</div>
<div class="ep" style="letter-spacing:0.492px">/microservicebola/bolave...ployees/{employee_uuid}</div>
<div class="cat" style="letter-spacing:0.1px">read</div>
<div class="svc">Web App v1</div>
<div class="tag" style="width:100.6px;letter-spacing:0.025px">BOLA Vertical</div>
</div>
<svg class="ic" style="left:1444.0px;top:684px" width="13" height="14" viewBox="0 0 13 14"><path d="M6.5 0.8c2 .9 3.8 1.3 5.6 1.4 0 5.2-1.9 9-5.6 11-3.7-2-5.6-5.8-5.6-11 1.8-.1 3.6-.5 5.6-1.4z" fill="none" stroke="#fff" stroke-width="1.4"/><circle cx="6.5" cy="5.8" r="1.5" fill="#fff"/><rect x="5.8" y="6" width="1.4" height="3.2" fill="#fff"/></svg>
<svg class="ic" style="left:1467.0px;top:684px" width="12" height="14" viewBox="0 0 12 14"><rect x="0" y="0" width="12" height="14" rx="1.2" fill="#fff"/><circle cx="6" cy="5.6" r="2.1" fill="#1c1429"/><path d="M2 11.2c0-1.6 1.6-2.4 4-2.4s4 .8 4 2.4v.6H2z" fill="#1c1429"/></svg>
<svg class="ic" style="left:1527.0px;top:684px" width="12" height="12" viewBox="0 0 12 12" fill="none" stroke="#fff" stroke-width="1.2"><circle cx="6" cy="3.2" r="2.3"/><path d="M1 10.8c0-2 2-3.2 5-3.2s5 1.2 5 3.2v.6H1z"/></svg>
<svg class="ic" style="left:1549.5px;top:684px" width="12" height="14" viewBox="0 0 12 14"><rect x="0" y="0" width="12" height="14" rx="1.2" fill="#fff"/><circle cx="6" cy="5.6" r="2.1" fill="#1c1429"/><path d="M2 11.2c0-1.6 1.6-2.4 4-2.4s4 .8 4 2.4v.6H2z" fill="#1c1429"/></svg>
<svg class="ic" style="left:1721.5px;top:684px" width="11" height="16" viewBox="0 0 11 16" fill="none" stroke="#fff" stroke-width="1.3"><rect x="1.15" y="7.2" width="8.7" height="6.5" rx="0.9"/><path d="M2.5 7.2V4.1a3 3 0 0 1 6 0v3.1"/></svg>
<div class="row" style="top:717px;background:#1c1429">
<div class="mb post" style="letter-spacing:0.117px;text-indent:0.117px">POST</div>
<div class="ep" style="letter-spacing:0.674px">/microservicebola/books/create</div>
<div class="cat" style="letter-spacing:0.54px">create</div>
<div class="svc">Web App v1</div>
<div class="tag" style="width:79px;letter-spacing:0.15px">MultiRead</div>
</div>
<svg class="ic" style="left:1444.0px;top:732px" width="13" height="14" viewBox="0 0 13 14"><path d="M6.5 0.8c2 .9 3.8 1.3 5.6 1.4 0 5.2-1.9 9-5.6 11-3.7-2-5.6-5.8-5.6-11 1.8-.1 3.6-.5 5.6-1.4z" fill="none" stroke="#fff" stroke-width="1.4"/><circle cx="6.5" cy="5.8" r="1.5" fill="#fff"/><rect x="5.8" y="6" width="1.4" height="3.2" fill="#fff"/></svg>
<svg class="ic" style="left:1466.0px;top:732px" width="14" height="14" viewBox="0 0 14 14"><circle cx="7" cy="7" r="6.3" fill="none" stroke="#fff" stroke-width="1.3"/><path d="M4.9 5.3a2.1 2.1 0 1 1 3 1.9c-.6.3-.9.7-.9 1.3v.6" fill="none" stroke="#fff" stroke-width="1.4"/><circle cx="7" cy="10.6" r=".9" fill="#fff"/></svg>
<svg class="ic" style="left:1527.0px;top:732px" width="12" height="14" viewBox="0 0 12 14"><rect x="0" y="0" width="12" height="14" rx="1.2" fill="#fff"/><circle cx="6" cy="5.6" r="2.1" fill="#1c1429"/><path d="M2 11.2c0-1.6 1.6-2.4 4-2.4s4 .8 4 2.4v.6H2z" fill="#1c1429"/></svg>
<svg class="ic" style="left:1548.5px;top:732px" width="14" height="14" viewBox="0 0 14 14"><circle cx="7" cy="7" r="6.3" fill="none" stroke="#fff" stroke-width="1.3"/><path d="M4.9 5.3a2.1 2.1 0 1 1 3 1.9c-.6.3-.9.7-.9 1.3v.6" fill="none" stroke="#fff" stroke-width="1.4"/><circle cx="7" cy="10.6" r=".9" fill="#fff"/></svg>
<svg class="ic" style="left:1721.5px;top:732px" width="11" height="16" viewBox="0 0 11 16" fill="none" stroke="#fff" stroke-width="1.3"><rect x="1.15" y="7.2" width="8.7" height="6.5" rx="0.9"/><path d="M2.5 7.2V4.1a3 3 0 0 1 6 0v3.1"/></svg>
<div class="row" style="top:765px;background:#221a33">
<div class="mb get" style="letter-spacing:-0.725px;text-indent:-0.725px">GET</div>
<div class="ep" style="letter-spacing:0.796px">/microservicebola/books/get-book/{book_id}</div>
<div class="cat" style="letter-spacing:0.1px">read</div>
<div class="svc">Web App v1</div>
<div class="tag" style="width:79px;letter-spacing:0.15px">MultiRead</div>
</div>
<svg class="ic" style="left:1444.5px;top:780px" width="12" height="14" viewBox="0 0 12 14"><rect x="0" y="0" width="12" height="14" rx="1.2" fill="#fff"/><circle cx="6" cy="5.6" r="2.1" fill="#1c1429"/><path d="M2 11.2c0-1.6 1.6-2.4 4-2.4s4 .8 4 2.4v.6H2z" fill="#1c1429"/></svg>
<svg class="ic" style="left:1466.5px;top:780px" width="13" height="14" viewBox="0 0 13 14"><path d="M6.5 0.8c2 .9 3.8 1.3 5.6 1.4 0 5.2-1.9 9-5.6 11-3.7-2-5.6-5.8-5.6-11 1.8-.1 3.6-.5 5.6-1.4z" fill="none" stroke="#fff" stroke-width="1.4"/><circle cx="6.5" cy="5.8" r="1.5" fill="#fff"/><rect x="5.8" y="6" width="1.4" height="3.2" fill="#fff"/></svg>
<svg class="ic" style="left:1526.0px;top:780px" width="14" height="14" viewBox="0 0 14 14"><circle cx="7" cy="7" r="6.3" fill="none" stroke="#fff" stroke-width="1.3"/><path d="M4.9 5.3a2.1 2.1 0 1 1 3 1.9c-.6.3-.9.7-.9 1.3v.6" fill="none" stroke="#fff" stroke-width="1.4"/><circle cx="7" cy="10.6" r=".9" fill="#fff"/></svg>
<svg class="ic" style="left:1549.5px;top:780px" width="12" height="14" viewBox="0 0 12 14"><rect x="0" y="0" width="12" height="14" rx="1.2" fill="#fff"/><circle cx="6" cy="5.6" r="2.1" fill="#1c1429"/><path d="M2 11.2c0-1.6 1.6-2.4 4-2.4s4 .8 4 2.4v.6H2z" fill="#1c1429"/></svg>
<svg class="ic" style="left:1721.5px;top:780px" width="11" height="16" viewBox="0 0 11 16" fill="none" stroke="#fff" stroke-width="1.3"><rect x="1.15" y="7.2" width="8.7" height="6.5" rx="0.9"/><path d="M2.5 7.2V4.1a3 3 0 0 1 6 0v3.1"/></svg>
<div class="t tb" style="left:1432px;top:854px;font-size:16.5px;color:#fff;letter-spacing:0.479px;-webkit-text-stroke:0.2px #fff">41 items</div>
<div class="ab" style="left:1515px;top:846px;width:238px;height:38px;background:#121212;border:1px solid #26222c;border-radius:4px;overflow:hidden">
<div class="ab" style="left:0px;top:0;width:40px;height:37px;background:transparent;text-align:center;line-height:36px;font-size:16.5px;color:#fff"></div>
<div class="ab" style="left:40px;top:0;width:40px;height:37px;background:#d6337e;text-align:center;line-height:36px;font-size:16.5px;color:#fff"></div>
<div class="ab" style="left:79px;top:0;width:40px;height:37px;background:transparent;border-left:1px solid #26222c;text-align:center;line-height:36px;font-size:16.5px;color:#fff"></div>
<div class="ab" style="left:119px;top:0;width:40px;height:37px;background:transparent;border-left:1px solid #26222c;text-align:center;line-height:36px;font-size:16.5px;color:#fff"></div>
<div class="ab" style="left:159px;top:0;width:40px;height:37px;background:transparent;border-left:1px solid #26222c;text-align:center;line-height:36px;font-size:16.5px;color:#fff"></div>
<div class="ab" style="left:198px;top:0;width:40px;height:37px;background:transparent;border-left:1px solid #26222c;text-align:center;line-height:36px;font-size:16.5px;color:#fff"></div>
</div>
<div class="t" style="left:1564px;top:855px;width:20px;text-align:center;font-size:16.5px;color:#fff;-webkit-text-stroke:0.3px #fff">1</div>
<div class="t" style="left:1604px;top:855px;width:20px;text-align:center;font-size:16.5px;color:#fff;-webkit-text-stroke:0.3px #fff">2</div>
<div class="t" style="left:1644px;top:855px;width:20px;text-align:center;font-size:16.5px;color:#fff;-webkit-text-stroke:0.3px #fff">3</div>
<div class="t" style="left:1684px;top:855px;width:20px;text-align:center;font-size:16.5px;color:#fff;-webkit-text-stroke:0.3px #fff">4</div>
<svg class="ic" style="left:1530px;top:857px" width="9" height="15" viewBox="0 0 9 15"><path d="M8 1L1.5 7.5 8 14" stroke="#b7b3bd" stroke-width="1.6" fill="none"/></svg>
<svg class="ic" style="left:1730px;top:857px" width="9" height="15" viewBox="0 0 9 15"><path d="M1 1l6.5 6.5L1 14" stroke="#fff" stroke-width="1.6" fill="none"/></svg>
<div class="sel" style="left:1770px;top:846px;width:125px"><span style="letter-spacing:0.113px">12 / page</span><svg width="11" height="7" viewBox="0 0 11 7" style="right:16px;top:16px"><path d="M1 1l4.5 4.5L10 1" stroke="#fff" stroke-width="1.5" fill="none"/></svg></div>
</body></html>
